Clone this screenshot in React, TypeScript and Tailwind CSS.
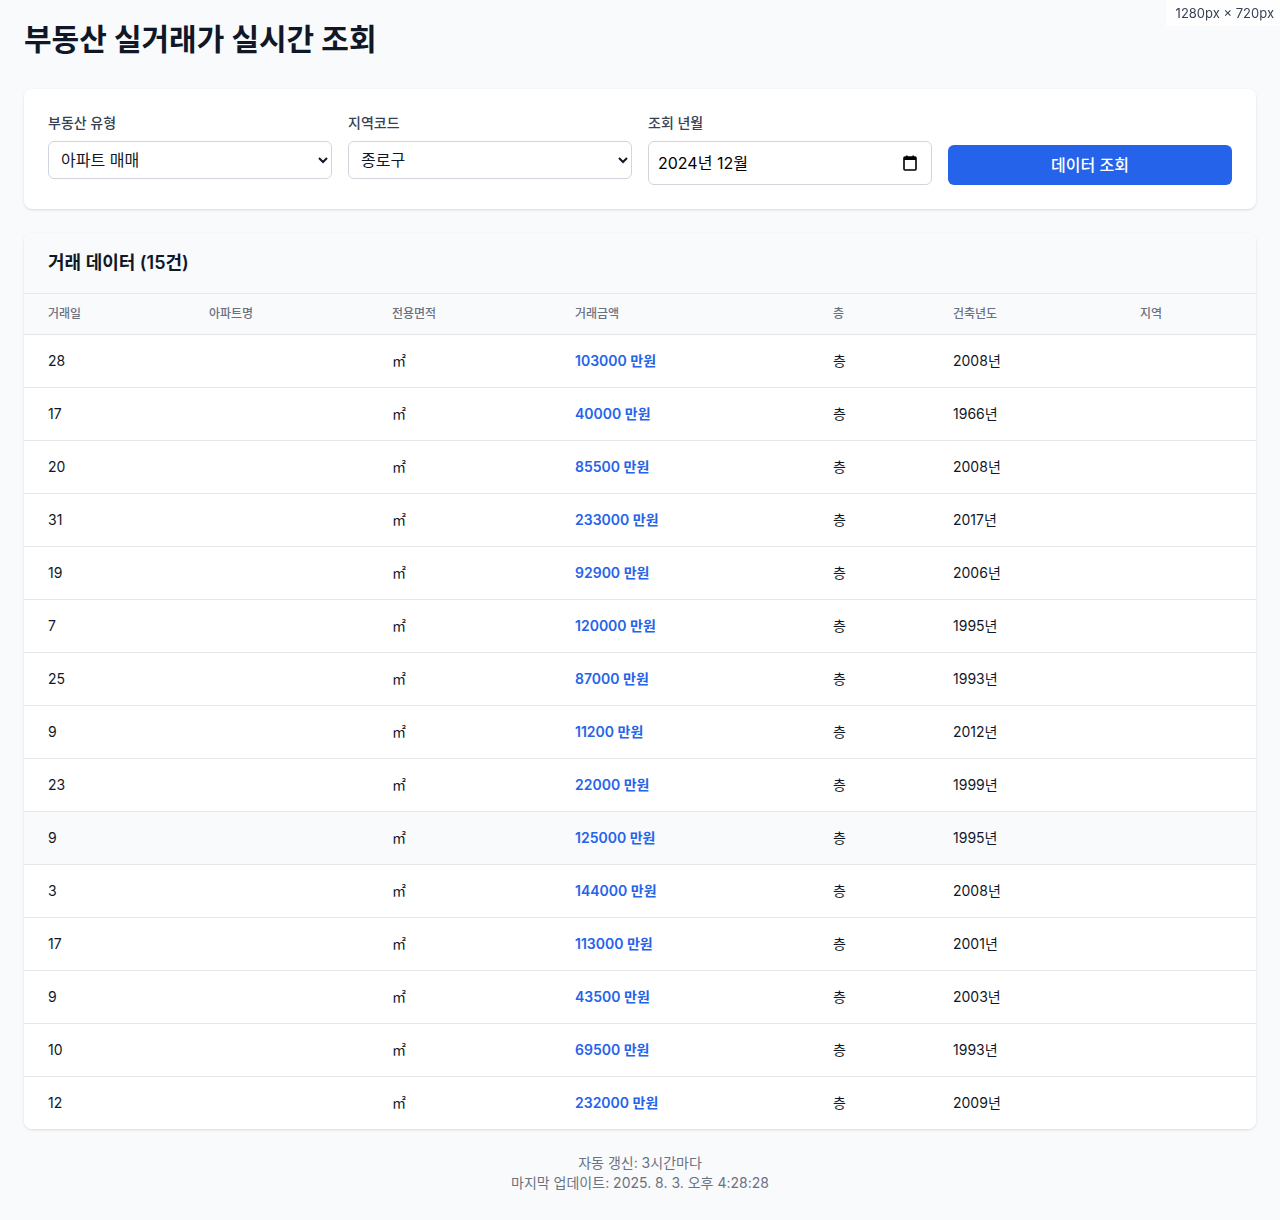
import React from "react"

const rows = [
  { day: 28, price: 103000, year: 2008 },
  { day: 17, price: 40000, year: 1966 },
  { day: 20, price: 85500, year: 2008 },
  { day: 31, price: 233000, year: 2017 },
  { day: 19, price: 92900, year: 2006 },
  { day: 7, price: 120000, year: 1995 },
  { day: 25, price: 87000, year: 1993 },
  { day: 9, price: 11200, year: 2012 },
  { day: 23, price: 22000, year: 1999 },
  { day: 9, price: 125000, year: 1995 },
  { day: 3, price: 144000, year: 2008 },
  { day: 17, price: 113000, year: 2001 },
  { day: 9, price: 43500, year: 2003 },
  { day: 10, price: 69500, year: 1993 },
  { day: 12, price: 232000, year: 2009 },
]

const headers = ["거래일", "아파트명", "전용면적", "거래금액", "층", "건축년도", "지역"]
const widths = [161, 183, 183, 258, 120, 187, 140]

export default function App() {
  return (
    <div
      className="min-h-screen bg-gray-50 px-6 pt-[21px] pb-6 text-gray-900"
      style={{ fontFamily: 'Inter, "Noto Sans CJK KR", sans-serif' }}
    >
      {/* viewport badge */}
      <div className="fixed top-0 right-0 bg-white/80 py-1 pr-1.5 pl-2.5 text-[13px] leading-[18px] text-gray-700">
        1280px × 720px
      </div>

      <h1 className="mb-8 text-3xl font-bold">부동산 실거래가 실시간 조회</h1>

      {/* search form */}
      <div className="mb-6 rounded-lg bg-white p-6 shadow">
        <div className="grid grid-cols-4 items-start gap-4">
          <div>
            <label className="mb-2 block text-sm font-medium text-gray-700">부동산 유형</label>
            <select className="h-[38px] w-full rounded-md border border-gray-300 bg-white px-2 text-base">
              <option>아파트 매매</option>
            </select>
          </div>
          <div>
            <label className="mb-2 block text-sm font-medium text-gray-700">지역코드</label>
            <select className="h-[38px] w-full rounded-md border border-gray-300 bg-white px-2 text-base">
              <option>종로구</option>
            </select>
          </div>
          <div>
            <label className="mb-2 block text-sm font-medium text-gray-700">조회 년월</label>
            <div className="flex h-[44px] w-full items-center justify-between rounded-md border border-gray-300 bg-white pr-3.5 pl-[9px] text-base text-black">
              <span>2024년 12월</span>
              <svg width="14" height="16" viewBox="0 0 14 16" fill="none">
                <rect x="1" y="2" width="12" height="13" rx="1" stroke="black" strokeWidth="1.6" />
                <rect x="1" y="2" width="12" height="3" fill="black" />
                <rect x="3" y="0.5" width="1.6" height="3" fill="black" />
                <rect x="9.4" y="0.5" width="1.6" height="3" fill="black" />
              </svg>
            </div>
          </div>
          <button className="mt-[4px] h-10 w-full self-end rounded-md bg-[#2563eb] text-base font-medium text-white">
            데이터 조회
          </button>
        </div>
      </div>

      {/* results */}
      <div className="overflow-hidden rounded-lg bg-white shadow">
        <div className="border-b border-gray-200 bg-gray-50 px-6 py-4">
          <h2 className="text-lg font-semibold">거래 데이터 (15건)</h2>
        </div>
        <table className="w-full table-fixed">
          <colgroup>
            {widths.map((w, i) => (
              <col key={i} style={{ width: w }} />
            ))}
          </colgroup>
          <thead className="bg-gray-50">
            <tr>
              {headers.map((h) => (
                <th key={h} className="px-6 py-3 text-left text-xs font-medium text-gray-500">
                  {h}
                </th>
              ))}
            </tr>
          </thead>
          <tbody className="divide-y divide-gray-200 border-t border-gray-200">
            {rows.map((r, i) => (
              <tr key={i} className={i === 9 ? "bg-gray-50" : "bg-white"}>
                <td className="px-6 py-4 text-sm">{r.day}</td>
                <td className="px-6 py-4 text-sm"></td>
                <td className="px-6 py-4 text-sm">㎡</td>
                <td className="px-6 py-4 text-sm font-semibold text-[#2563eb]">{r.price} 만원</td>
                <td className="px-6 py-4 text-sm">층</td>
                <td className="px-6 py-4 text-sm">{r.year}년</td>
                <td className="px-6 py-4 text-sm"></td>
              </tr>
            ))}
          </tbody>
        </table>
      </div>

      <div className="mt-6 text-center text-sm text-gray-500">
        <p>자동 갱신: 3시간마다</p>
        <p>마지막 업데이트: 2025. 8. 3. 오후 4:28:28</p>
      </div>
    </div>
  )
}
